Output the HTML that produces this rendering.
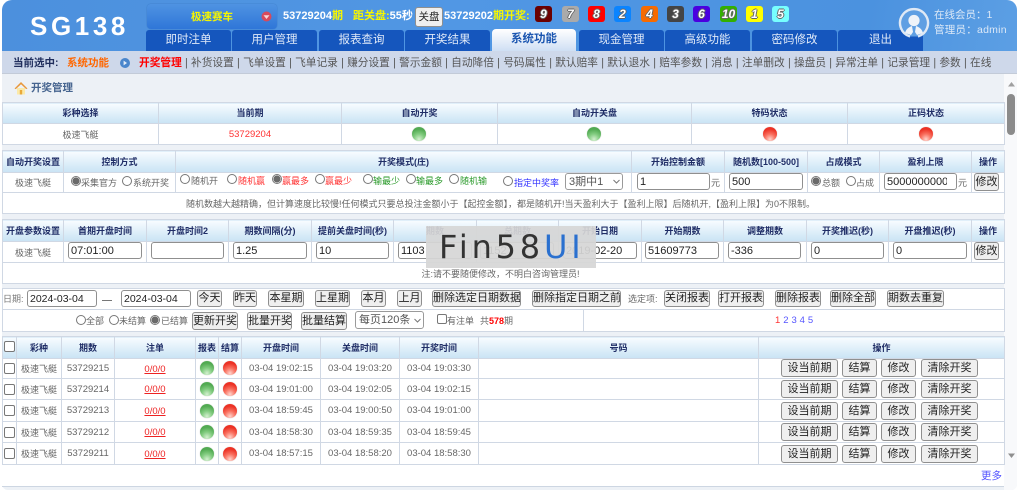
<!DOCTYPE html>
<html lang="zh"><head><meta charset="utf-8"><title>开奖管理</title>
<style>
html,body{margin:0;padding:0;width:1024px;height:493px;overflow:hidden;background:#fff}
body,input,button,select{font-family:"Liberation Sans","Noto Sans CJK SC",sans-serif}
body{font-size:9px;color:#666;position:relative}
.a,.t,table,input,button,select,.b{position:absolute}
.t{white-space:nowrap;line-height:12px}
#hd{left:2px;top:0;width:1015px;height:51px;border-radius:10px 10px 0 0;background:linear-gradient(100deg,#4c90dd 0,#5197e4 45%,#4b92df 85%,#5c9fe4 100%)}
.tab{top:30px;height:21px;width:85px;background:#1556bd;color:#dfe9f8;font-size:11.5px;line-height:21px;text-align:center;border-radius:3px 3px 0 0}
.ball{top:6px;width:17px;height:16px;border-radius:3px;font:italic bold 12px/16px "Liberation Sans",sans-serif;color:#fff;text-align:center;text-shadow:-1px 0 #666,1px 0 #666,0 -1px #666,0 1px #666}
#nav{left:2px;top:51px;width:1015px;height:23px;background:#ced8ea;border-bottom:1px solid #c3cbd8;box-sizing:border-box}
#main{left:2px;top:74px;width:1015px;height:416px;background:#edf1f6;border-radius:0 0 6px 6px}
#right{left:1004px;top:74px;width:13px;height:416px;background:#f8f9fb;border-radius:0 0 6px 0}
table{border-collapse:collapse;table-layout:fixed;background:#fff;left:2px}
td,th{border:1px solid #d0d8e4;padding:0;text-align:center;font-size:9px;overflow:hidden;white-space:nowrap;line-height:12px;box-sizing:border-box}
th{background:linear-gradient(#f8fcff,#c9e3f4);color:#1f2d66;font-weight:bold}
td{color:#666;padding-top:1px}
.g,.r{position:absolute;width:14px;height:14px;border-radius:50%;box-shadow:0 0 1px #bbb}
.g{background:radial-gradient(circle at 50% 88%,#d4f0d0 0,#82cc80 38%,#52aa52 72%)}
.r{background:radial-gradient(circle at 50% 88%,#ffd4cc 0,#f9705f 38%,#ec3225 72%)}
input[type=text]{box-sizing:border-box;height:17px;border:1px solid #8f8f8f;border-radius:3px;background:#fff;font-size:11px;color:#222;padding:0 2px;margin:0;line-height:15px}
input[type=radio],input[type=checkbox]{appearance:none;-webkit-appearance:none;margin:0;width:10px;height:10px;box-sizing:border-box;border:1px solid #777;background:#fff}
input[type=radio]{border-radius:50%}
input[type=radio]:checked{background:radial-gradient(circle,#6a6a6a 0,#6a6a6a 58%,#fff 66%)}
input[type=checkbox]{border-radius:2px}
button{box-sizing:border-box;height:18px;padding:0;border:1px solid #8f8f8f;border-radius:3px;background:#efefef;color:#222;font-size:11px;line-height:15px;white-space:nowrap;overflow:hidden}
select{appearance:none;-webkit-appearance:none;box-sizing:border-box;height:17px;border:1px solid #9a9a9a;border-radius:3px;background:#fff;color:#555;font-size:11px;padding:0 3px;margin:0}
.red{color:#f33}.grn{color:#2a9a2a}.blu{color:#33f}
u{color:#e22}
</style></head><body>

<div class="a" id="hd"></div>
<div class="t" style="left:30px;top:12px;line-height:28px;font-size:26px;font-weight:bold;color:#fff;letter-spacing:3.6px">SG138</div>
<div class="a" style="left:147px;top:4px;width:130px;height:25px;border-radius:4px;background:linear-gradient(#4f93e2,#2f76d8);box-shadow:0 0 1px #2b62b0"></div>
<div class="t" style="left:191px;top:11px;font-size:10.5px;font-weight:bold;color:#f6f600">极速赛车</div>
<svg class="a" style="left:261px;top:11px" width="11" height="11" viewBox="0 0 11 11"><circle cx="5.500" cy="5.500" r="5" fill="#d64a5c"/><path d="M2.500 4.200h6L5.500 8z" fill="#f7d6da"/></svg>
<div class="t" style="left:283px;top:10px;font-size:11px;font-weight:bold;color:#fff">53729204<span style="color:#f6f600">期</span></div>
<div class="t" style="left:353px;top:10px;font-size:11px;font-weight:bold;color:#fff"><span style="color:#f6f600">距关盘:</span>55秒</div>
<button style="left:415px;top:7px;width:28px;height:20px;font-size:10.5px">关盘</button>
<div class="t" style="left:444px;top:10px;font-size:11px;font-weight:bold;color:#fff">53729202<span style="color:#f6f600">期开奖:</span></div>
<div class="ball a" style="left:535px;background:#6b0000">9</div>
<div class="ball a" style="left:562px;background:#aaa">7</div>
<div class="ball a" style="left:588px;background:#f00">8</div>
<div class="ball a" style="left:614px;background:#0a84ff">2</div>
<div class="ball a" style="left:641px;background:#f76b00">4</div>
<div class="ball a" style="left:667px;background:#444">3</div>
<div class="ball a" style="left:693px;background:#4a00e0">6</div>
<div class="ball a" style="left:720px;background:#33b000">10</div>
<div class="ball a" style="left:746px;background:#ff0">1</div>
<div class="ball a" style="left:772px;background:#7ff">5</div>

<div class="a tab" style="left:146px">即时注单</div>
<div class="a tab" style="left:232px">用户管理</div>
<div class="a tab" style="left:319px">报表查询</div>
<div class="a tab" style="left:405px">开奖结果</div>
<div class="a tab" style="left:492px;top:29px;height:22px;width:84px;border-radius:4px 4px 0 0;background:linear-gradient(#fff,#cfdff4);color:#1a55b0;font-weight:bold">系统功能</div>
<div class="a tab" style="left:579px">现金管理</div>
<div class="a tab" style="left:665px">高级功能</div>
<div class="a tab" style="left:752px">密码修改</div>
<div class="a tab" style="left:838px">退出</div>

<svg class="a" style="left:898px;top:7px" width="32" height="32" viewBox="0 0 32 32"><path d="M12 29.500A14 14 0 1 1 20 29.500" fill="#5f9fe3" stroke="#dfe9f5" stroke-width="2.400"/><circle cx="16" cy="13.500" r="5.600" fill="#eef3f9"/><path d="M7 26c1-4 4-6 7-7l1 6-2 3zM25 26c-1-4-4-6-7-7l-1 6 2 3z" fill="#eef3f9"/></svg>
<div class="t" style="left:934px;top:9px;font-size:10.5px;color:#dbe8f7">在线会员：1</div>
<div class="t" style="left:934px;top:24px;font-size:10.5px;color:#dbe8f7;letter-spacing:.25px">管理员：admin</div>

<div class="a" id="nav"></div>
<div class="t" style="left:13px;top:57px;font-size:10.5px;font-weight:bold;color:#1f2d5c">当前选中:</div>
<div class="t" style="left:67px;top:57px;font-size:10.5px;font-weight:bold;color:#f60">系统功能</div>
<svg class="a" style="left:120px;top:58px" width="10" height="10" viewBox="0 0 10 10"><circle cx="5" cy="5" r="5" fill="#4a86cc"/><path d="M3.600 2.600 7 5 3.600 7.400z" fill="#e6eef8"/></svg>
<div class="t" style="left:139px;top:57px;font-size:10.7px;color:#555;white-space:pre;word-spacing:.28px"><b style="color:#f00">开奖管理</b> | 补货设置 | 飞单设置 | 飞单记录 | 赚分设置 | 警示金额 | 自动降倍 | 号码属性 | 默认赔率 | 默认退水 | 赔率参数 | 消息 | 注单删改 | 操盘员 | 异常注单 | 记录管理 | 参数 | 在线</div>

<div class="a" id="main"></div>
<div class="a" id="right"></div>
<svg class="a" style="left:14px;top:81px" width="14" height="14" viewBox="0 0 14 14"><path d="M3 7h8v6.500H3z" fill="#fbe9a8"/><path d="M5.800 9h2.400v4.500H5.800z" fill="#e9a93a"/><path d="M.5 7.500 7 1l6.500 6.500-1.300.6L7 3.200 1.800 8.100z" fill="#e8973a"/></svg>
<div class="t" style="left:31px;top:82px;font-size:10.5px;font-weight:bold;color:#46648f">开奖管理</div>

<!-- scrollbar -->
<svg class="a" style="left:1007px;top:80px" width="9" height="8" viewBox="0 0 9 8"><path d="M1 6.500 4.500 2 8 6.500z" fill="#a0a0a0"/></svg>
<div class="a" style="left:1007px;top:94px;width:8px;height:41px;border-radius:4px;background:#8b8b8b"></div>
<svg class="a" style="left:1007px;top:452px" width="9" height="8" viewBox="0 0 9 8"><path d="M1 1.500 4.500 6 8 1.500z" fill="#8f8f8f"/></svg>

<!-- table 1 -->
<table style="top:102px;width:1002px">
<colgroup><col width="156"><col width="183"><col width="156"><col width="194"><col width="156"><col width="157"></colgroup>
<tr style="height:21px"><th>彩种选择</th><th>当前期</th><th>自动开奖</th><th>自动开关盘</th><th>特码状态</th><th>正码状态</th></tr>
<tr style="height:21px"><td>极速飞艇</td><td class="red" style="font-size:9.500px">53729204</td><td></td><td></td><td></td><td></td></tr>
</table>
<div class="g" style="left:412px;top:127px"></div><div class="g" style="left:587px;top:127px"></div>
<div class="r" style="left:763px;top:127px"></div><div class="r" style="left:919px;top:127px"></div>

<!-- table 2 -->
<table style="top:150px;width:1002px">
<colgroup><col width="61"><col width="112"><col width="456"><col width="93"><col width="83"><col width="72"><col width="92"><col width="33"></colgroup>
<tr style="height:22px"><th>自动开奖设置</th><th>控制方式</th><th>开奖模式(庄)</th><th>开始控制金额</th><th>随机数[100-500]</th><th>占成模式</th><th>盈利上限</th><th>操作</th></tr>
<tr style="height:20px"><td>极速飞艇</td><td></td><td></td><td></td><td></td><td></td><td></td><td></td></tr>
<tr style="height:21px"><td colspan="8" style="padding-right:6px">随机数越大越精确，但计算速度比较慢!任何模式只要总投注金额小于【起控金额】，都是随机开!当天盈利大于【盈利上限】后随机开,【盈利上限】为0不限制。</td></tr>
</table>
<input type="radio" class="a" style="left:71px;top:176px" checked name="m1"><span class="t" style="left:81px;top:177px">采集官方</span>
<input type="radio" class="a" style="left:122px;top:176px" name="m1"><span class="t" style="left:133px;top:177px">系统开奖</span>
<input type="radio" class="a" style="left:180px;top:174px" name="m2"><span class="t" style="left:191px;top:175px">随机开</span>
<input type="radio" class="a" style="left:227px;top:174px" name="m2"><span class="t red" style="left:238px;top:175px">随机赢</span>
<input type="radio" class="a" style="left:272px;top:174px" checked name="m2"><span class="t red" style="left:282px;top:175px">赢最多</span>
<input type="radio" class="a" style="left:315px;top:174px" name="m2"><span class="t red" style="left:325px;top:175px">赢最少</span>
<input type="radio" class="a" style="left:363px;top:174px" name="m2"><span class="t grn" style="left:373px;top:175px">输最少</span>
<input type="radio" class="a" style="left:406px;top:174px" name="m2"><span class="t grn" style="left:416px;top:175px">输最多</span>
<input type="radio" class="a" style="left:449px;top:174px" name="m2"><span class="t grn" style="left:460px;top:175px">随机输</span>
<input type="radio" class="a" style="left:503px;top:176px" name="m2"><span class="t blu" style="left:514px;top:177px">指定中奖率</span>
<select style="left:565px;top:173px;width:58px"><option>3期中1</option></select>
<svg class="a" style="left:613px;top:179px" width="7" height="5" viewBox="0 0 7 5"><path d="M.5 1 3.500 4 6.500 1" fill="none" stroke="#777"/></svg>
<input type="text" style="left:637px;top:173px;width:73px" value="1"><span class="t" style="left:711px;top:177px">元</span>
<input type="text" style="left:729px;top:173px;width:74px" value="500">
<input type="radio" class="a" style="left:811px;top:176px" checked name="m3"><span class="t" style="left:822px;top:177px">总额</span>
<input type="radio" class="a" style="left:846px;top:176px" name="m3"><span class="t" style="left:856px;top:177px">占成</span>
<input type="text" style="left:884px;top:173px;width:73px;padding-right:9px" value="5000000000"><span class="t" style="left:958px;top:177px">元</span>
<button style="left:974px;top:173px;width:25px">修改</button>

<!-- table 3 -->
<table style="top:219px;width:1002px">
<colgroup><col width="61"><col width="83"><col width="82"><col width="83"><col width="82"><col width="83"><col width="82"><col width="83"><col width="82"><col width="83"><col width="82"><col width="83"><col width="33"></colgroup>
<tr style="height:22px"><th>开盘参数设置</th><th>首期开盘时间</th><th>开盘时间2</th><th>期数间隔(分)</th><th>提前关盘时间(秒)</th><th>期数</th><th>总期数</th><th>开始日期</th><th>开始期数</th><th>调整期数</th><th>开奖推迟(秒)</th><th>开盘推迟(秒)</th><th>操作</th></tr>
<tr style="height:21px"><td>极速飞艇</td><td></td><td></td><td></td><td></td><td></td><td></td><td></td><td></td><td></td><td></td><td></td><td></td></tr>
<tr style="height:21px"><td colspan="13" style="padding-right:6px">注:请不要随便修改，不明白咨询管理员!</td></tr>
</table>
<input type="text" style="left:68px;top:242px;width:74px" value="07:01:00">
<input type="text" style="left:151px;top:242px;width:73px" value="">
<input type="text" style="left:233px;top:242px;width:74px" value="1.25">
<input type="text" style="left:316px;top:242px;width:73px" value="10">
<input type="text" style="left:398px;top:242px;width:74px" value="1103">
<input type="text" style="left:480px;top:242px;width:74px" value="1152">
<input type="text" style="left:563px;top:242px;width:74px" value="2019-02-20">
<input type="text" style="left:645px;top:242px;width:74px" value="51609773">
<input type="text" style="left:728px;top:242px;width:73px" value="-336">
<input type="text" style="left:811px;top:242px;width:73px" value="0">
<input type="text" style="left:893px;top:242px;width:74px" value="0">
<button style="left:974px;top:242px;width:25px">修改</button>

<!-- table 4 -->
<table style="top:288px;width:1002px">
<colgroup><col width="581"><col width="421"></colgroup>
<tr style="height:21px"><td colspan="2"></td></tr>
<tr style="height:22px"><td></td><td></td></tr>
</table>
<span class="t" style="left:3px;top:293px;color:#777">日期:</span>
<input type="text" style="left:27px;top:290px;width:70px;font-size:10.5px" value="2024-03-04">
<div class="a" style="left:102px;top:300px;width:10px;height:1px;background:#777"></div>
<input type="text" style="left:121px;top:290px;width:70px;font-size:10.5px" value="2024-03-04">
<button style="left:197px;top:290px;width:25px;height:17px">今天</button>
<button style="left:233px;top:290px;width:24px;height:17px">昨天</button>
<button style="left:268px;top:290px;width:36px;height:17px">本星期</button>
<button style="left:315px;top:290px;width:35px;height:17px">上星期</button>
<button style="left:361px;top:290px;width:25px;height:17px">本月</button>
<button style="left:397px;top:290px;width:25px;height:17px">上月</button>
<button style="left:432px;top:290px;width:89px;height:17px">删除选定日期数据</button>
<button style="left:532px;top:290px;width:89px;height:17px">删除指定日期之前</button>
<span class="t" style="left:628px;top:293px">选定项:</span>
<button style="left:664px;top:290px;width:46px;height:17px">关闭报表</button>
<button style="left:718px;top:290px;width:46px;height:17px">打开报表</button>
<button style="left:775px;top:290px;width:46px;height:17px">删除报表</button>
<button style="left:830px;top:290px;width:46px;height:17px">删除全部</button>
<button style="left:887px;top:290px;width:57px;height:17px">期数去重复</button>

<input type="radio" class="a" style="left:76px;top:315px" name="m4"><span class="t" style="left:86px;top:315px">全部</span>
<input type="radio" class="a" style="left:109px;top:315px" name="m4"><span class="t" style="left:119px;top:315px">未结算</span>
<input type="radio" class="a" style="left:150px;top:315px" checked name="m4"><span class="t" style="left:161px;top:315px">已结算</span>
<button style="left:192px;top:312px;width:46px">更新开奖</button>
<button style="left:247px;top:312px;width:45px">批量开奖</button>
<button style="left:301px;top:312px;width:46px">批量结算</button>
<select style="left:355px;top:311px;width:69px;height:18px"><option>每页120条</option></select>
<svg class="a" style="left:414px;top:318px" width="7" height="5" viewBox="0 0 7 5"><path d="M.5 1 3.500 4 6.500 1" fill="none" stroke="#777"/></svg>
<input type="checkbox" class="a" style="left:437px;top:314px"><span class="t" style="left:447px;top:315px">有注单</span>
<span class="t" style="left:480px;top:315px">共<b style="color:#f00">578</b>期</span>
<span class="t" style="left:775px;top:315px;font-size:9.5px;color:#55f;word-spacing:.3px"><span style="color:#f33">1</span> 2 3 4 5</span>

<!-- table 5 -->
<div class="a" style="left:2px;top:336px;width:1002px;height:151px;background:#fff;border-bottom:1px solid #cdd6e2;box-sizing:border-box"></div>
<table style="top:336px;width:1002px">
<colgroup><col width="14"><col width="45"><col width="53"><col width="81"><col width="23"><col width="23"><col width="79"><col width="79"><col width="79"><col width="280"><col width="246"></colgroup>
<tr style="height:22px"><th></th><th>彩种</th><th>期数</th><th>注单</th><th>报表</th><th>结算</th><th>开盘时间</th><th>关盘时间</th><th>开奖时间</th><th>号码</th><th>操作</th></tr>
<tr style="height:20px;border-bottom:1px solid #c5d0e2"><td></td><td>极速飞艇</td><td style="font-size:9.5px">53729215</td><td><u style="font-size:9.5px">0/0/0</u></td><td></td><td></td><td style="font-size:9.5px">03-04 19:02:15</td><td style="font-size:9.5px">03-04 19:03:20</td><td style="font-size:9.5px">03-04 19:03:30</td><td></td><td></td></tr>
<tr style="height:21px;border-bottom:1px solid #c5d0e2"><td></td><td>极速飞艇</td><td style="font-size:9.5px">53729214</td><td><u style="font-size:9.5px">0/0/0</u></td><td></td><td></td><td style="font-size:9.5px">03-04 19:01:00</td><td style="font-size:9.5px">03-04 19:02:05</td><td style="font-size:9.5px">03-04 19:02:15</td><td></td><td></td></tr>
<tr style="height:22px;border-bottom:1px solid #c5d0e2"><td></td><td>极速飞艇</td><td style="font-size:9.5px">53729213</td><td><u style="font-size:9.5px">0/0/0</u></td><td></td><td></td><td style="font-size:9.5px">03-04 18:59:45</td><td style="font-size:9.5px">03-04 19:00:50</td><td style="font-size:9.5px">03-04 19:01:00</td><td></td><td></td></tr>
<tr style="height:21px;border-bottom:1px solid #c5d0e2"><td></td><td>极速飞艇</td><td style="font-size:9.5px">53729212</td><td><u style="font-size:9.5px">0/0/0</u></td><td></td><td></td><td style="font-size:9.5px">03-04 18:58:30</td><td style="font-size:9.5px">03-04 18:59:35</td><td style="font-size:9.5px">03-04 18:59:45</td><td></td><td></td></tr>
<tr style="height:22px;border-bottom:1px solid #c5d0e2"><td></td><td>极速飞艇</td><td style="font-size:9.5px">53729211</td><td><u style="font-size:9.5px">0/0/0</u></td><td></td><td></td><td style="font-size:9.5px">03-04 18:57:15</td><td style="font-size:9.5px">03-04 18:58:20</td><td style="font-size:9.5px">03-04 18:58:30</td><td></td><td></td></tr>
</table>
<input type="checkbox" class="a" style="left:4px;top:341px;width:11px;height:11px">
<input type="checkbox" class="a" style="left:4px;top:363px;width:11px;height:11px">
<input type="checkbox" class="a" style="left:4px;top:384px;width:11px;height:11px">
<input type="checkbox" class="a" style="left:4px;top:405px;width:11px;height:11px">
<input type="checkbox" class="a" style="left:4px;top:427px;width:11px;height:11px">
<input type="checkbox" class="a" style="left:4px;top:448px;width:11px;height:11px">

<div class="g" style="left:200px;top:361px"></div><div class="r" style="left:223px;top:361px"></div>
<div class="g" style="left:200px;top:382px"></div><div class="r" style="left:223px;top:382px"></div>
<div class="g" style="left:200px;top:404px"></div><div class="r" style="left:223px;top:404px"></div>
<div class="g" style="left:200px;top:425px"></div><div class="r" style="left:223px;top:425px"></div>
<div class="g" style="left:200px;top:447px"></div><div class="r" style="left:223px;top:447px"></div>

<button style="left:781px;top:359px;width:57px">设当前期</button><button style="left:842px;top:359px;width:35px">结算</button><button style="left:881px;top:359px;width:35px">修改</button><button style="left:921px;top:359px;width:57px">清除开奖</button>
<button style="left:781px;top:380px;width:57px">设当前期</button><button style="left:842px;top:380px;width:35px">结算</button><button style="left:881px;top:380px;width:35px">修改</button><button style="left:921px;top:380px;width:57px">清除开奖</button>
<button style="left:781px;top:402px;width:57px">设当前期</button><button style="left:842px;top:402px;width:35px">结算</button><button style="left:881px;top:402px;width:35px">修改</button><button style="left:921px;top:402px;width:57px">清除开奖</button>
<button style="left:781px;top:423px;width:57px">设当前期</button><button style="left:842px;top:423px;width:35px">结算</button><button style="left:881px;top:423px;width:35px">修改</button><button style="left:921px;top:423px;width:57px">清除开奖</button>
<button style="left:781px;top:445px;width:57px">设当前期</button><button style="left:842px;top:445px;width:35px">结算</button><button style="left:881px;top:445px;width:35px">修改</button><button style="left:921px;top:445px;width:57px">清除开奖</button>
<span class="t" style="left:981px;top:470px;font-size:10.5px;color:#55f">更多</span>

<!-- watermark -->
<div class="a" style="left:426px;top:226px;width:170px;height:42px;background:rgba(214,214,214,.93)"></div>
<div class="t" style="left:439px;top:229px;font-family:'DejaVu Sans',sans-serif;font-size:32px;line-height:36px;letter-spacing:3.8px;color:#333">Fin58<span style="color:#2a70cf">UI</span></div>
</body></html>
